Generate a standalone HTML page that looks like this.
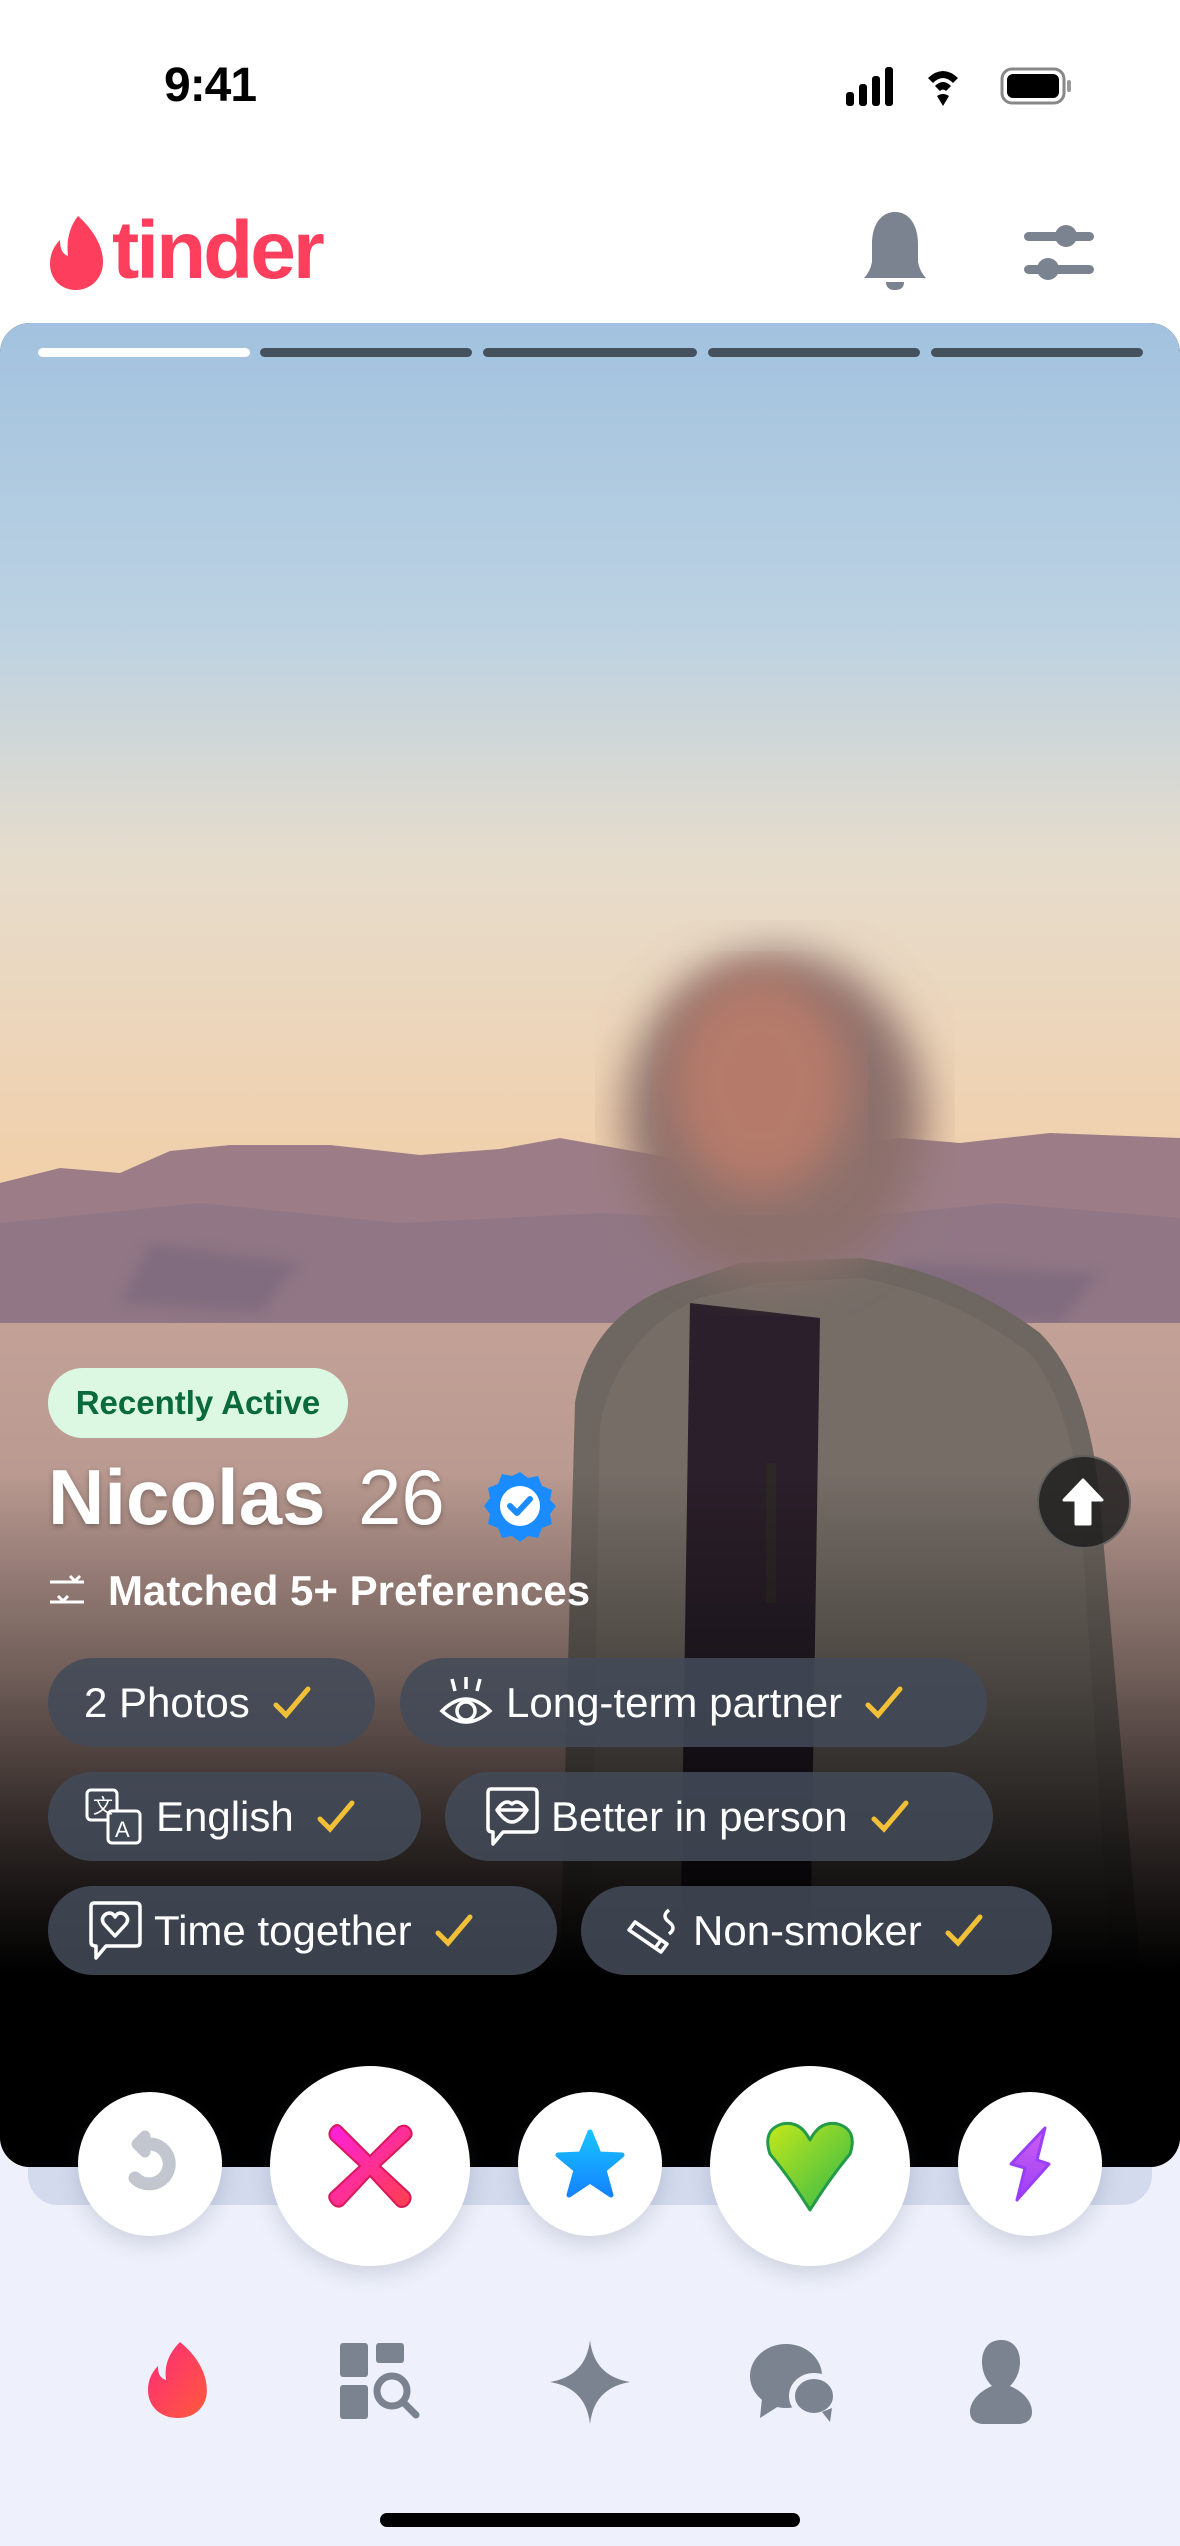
<!DOCTYPE html>
<html><head><meta charset="utf-8">
<style>
*{margin:0;padding:0;box-sizing:border-box}
body{width:1180px;height:2546px;position:relative;overflow:hidden;background:#fff;font-family:"Liberation Sans",sans-serif}
.abs{position:absolute}
.chip{position:absolute;height:89px;border-radius:45px;background:rgba(66,74,88,0.88);color:#fff;font-size:42px;display:flex;align-items:center;padding-left:36px;white-space:nowrap}
.chip svg.ic{margin-right:12px}
.chk{margin-left:22px}
.btn{position:absolute;border-radius:50%;background:#fff;box-shadow:0 8px 22px rgba(60,70,100,0.18);display:flex;align-items:center;justify-content:center}
</style></head><body>
<div class="abs" style="left:0;top:1960px;width:1180px;height:586px;background:#eef1fb"></div>

<!-- status bar -->
<div class="abs" style="left:164px;top:58px;font-size:48px;font-weight:bold;color:#000;letter-spacing:-1px">9:41</div>
<svg class="abs" style="left:846px;top:66px" width="240" height="42" viewBox="0 0 240 42">
<rect x="0" y="26" width="8" height="14" rx="3" fill="#000"/><rect x="13" y="18" width="8" height="22" rx="3" fill="#000"/><rect x="26" y="10" width="8" height="30" rx="3" fill="#000"/><rect x="39" y="1" width="8" height="39" rx="3" fill="#000"/>
<path d="M82 12 Q97 -2 112 12 L107 17 Q97 7 87 17Z M89 20 Q97 12 105 20 L100 25 Q97 22 94 25Z M97 40 L91 30 Q97 26 103 30Z" fill="#000"/>
<rect x="156" y="3" width="62" height="34" rx="10" fill="none" stroke="#888" stroke-width="3"/><rect x="161" y="8" width="52" height="24" rx="6" fill="#000"/><rect x="221" y="14" width="4" height="12" rx="2" fill="#999"/>
</svg>

<!-- header -->
<svg class="abs" style="left:48px;top:214px" width="60" height="76" viewBox="0 0 60 76"><path d="M30 2 C50 20 58 40 54 56 C50 70 38 76 28 76 C12 76 2 64 2 50 C2 40 6 32 12 26 C12 34 14 40 20 42 C18 26 22 12 30 2Z" fill="#fd3f5d"/></svg>
<div class="abs" style="left:112px;top:204px;font-size:82px;font-weight:bold;color:#fd3f5d;letter-spacing:-3px">tinder</div>
<svg class="abs" style="left:862px;top:212px" width="66" height="78" viewBox="0 0 66 78"><path d="M33 0 C48 0 56 14 56 32 L56 50 Q58 60 64 66 L2 66 Q8 60 10 50 L10 32 C10 14 18 0 33 0Z" fill="#7b8390"/><path d="M24 70 L42 70 Q42 78 33 78 Q24 78 24 70Z" fill="#7b8390"/></svg>
<svg class="abs" style="left:1022px;top:218px" width="74" height="68" viewBox="0 0 74 68"><rect x="2" y="14" width="70" height="9" rx="4.5" fill="#7b8390"/><circle cx="44" cy="18" r="11" fill="#7b8390"/><rect x="2" y="47" width="70" height="9" rx="4.5" fill="#7b8390"/><circle cx="26" cy="51" r="11" fill="#7b8390"/></svg>

<!-- shadow card -->
<div class="abs" style="left:28px;top:400px;width:1124px;height:1805px;border-radius:30px;background:#d3daee"></div>

<!-- card -->
<div class="abs" style="left:0;top:323px;width:1180px;height:1844px;border-radius:30px;overflow:hidden;background:#000">
<svg width="1180" height="1844" viewBox="0 0 1180 1844" style="position:absolute;left:0;top:0">
<defs>
<linearGradient id="sky" x1="0" y1="0" x2="0" y2="1"><stop offset="0" stop-color="#a2c2df"/><stop offset="0.35" stop-color="#bcd2e2"/><stop offset="0.62" stop-color="#e6dccc"/><stop offset="1" stop-color="#f2cfa9"/></linearGradient>
<linearGradient id="dark" x1="0" y1="0" x2="0" y2="1"><stop offset="0" stop-color="#000" stop-opacity="0"/><stop offset="0.4" stop-color="#000" stop-opacity="0.35"/><stop offset="0.75" stop-color="#000" stop-opacity="0.75"/><stop offset="1" stop-color="#000" stop-opacity="1"/></linearGradient>
<linearGradient id="sand" x1="0" y1="0" x2="0" y2="1"><stop offset="0" stop-color="#c3a197"/><stop offset="1" stop-color="#8f7a76"/></linearGradient>
<filter id="bl"><feGaussianBlur stdDeviation="22"/></filter>
<filter id="bl2"><feGaussianBlur stdDeviation="6"/></filter>
</defs>
<rect width="1180" height="870" fill="url(#sky)"/>
<path d="M0 860 L60 845 L120 850 L170 828 L230 822 L330 822 L420 832 L500 826 L560 815 L700 840 L900 815 L960 820 L1050 810 L1180 815 L1180 1010 L0 1010Z" fill="#9c7d87"/>
<path d="M0 900 L200 880 L400 900 L600 890 L800 900 L1000 880 L1180 895 L1180 1010 L0 1010Z" fill="#8e7584" opacity="0.8"/>
<path d="M150 920 L300 940 L260 990 L120 980Z M900 940 L1100 950 L1060 1000 L880 990Z" fill="#6f6278" opacity="0.5" filter="url(#bl2)"/>
<rect x="0" y="1000" width="1180" height="844" fill="url(#sand)"/>
<!-- person -->
<path d="M575 1080 Q590 990 680 960 L740 940 L860 935 Q960 950 1040 1010 Q1090 1060 1100 1180 L1140 1640 L560 1640 Z" fill="#6e6660"/>
<path d="M600 1100 Q620 1010 700 975 L760 960 L860 955 Q950 970 1030 1030 Q1070 1080 1080 1180 L1110 1640 L590 1640Z" fill="#7a716a" opacity="0.6"/>
<path d="M690 980 L820 995 L810 1640 L680 1640Z" fill="#2a1f2a"/>
<rect x="766" y="1140" width="10" height="140" fill="#2c2826"/>
<ellipse cx="775" cy="795" rx="150" ry="165" fill="#8c6f6c" filter="url(#bl)"/>
<ellipse cx="760" cy="760" rx="90" ry="110" fill="#b57a6a" filter="url(#bl)"/>
<rect x="0" y="1150" width="1180" height="500" fill="url(#dark)"/>
<rect x="0" y="1648" width="1180" height="200" fill="#000"/>
</svg>
<!-- progress -->
<div class="abs" style="left:38px;top:25px;width:212px;height:9px;border-radius:5px;background:#fff"></div>
<div class="abs" style="left:260px;top:25px;width:212px;height:9px;border-radius:5px;background:#45525e"></div>
<div class="abs" style="left:483px;top:25px;width:214px;height:9px;border-radius:5px;background:#45525e"></div>
<div class="abs" style="left:708px;top:25px;width:212px;height:9px;border-radius:5px;background:#45525e"></div>
<div class="abs" style="left:931px;top:25px;width:212px;height:9px;border-radius:5px;background:#45525e"></div>
</div>

<!-- recently active -->
<div class="abs" style="left:48px;top:1368px;width:300px;height:70px;border-radius:35px;background:#dcf8e2;color:#0a6a3c;font-size:33px;font-weight:bold;display:flex;align-items:center;justify-content:center">Recently Active</div>
<!-- name -->
<div class="abs" style="left:48px;top:1452px;font-size:78px;font-weight:bold;color:#fff;text-shadow:0 2px 6px rgba(0,0,0,.3)">Nicolas</div>
<div class="abs" style="left:358px;top:1452px;font-size:78px;color:#fff;text-shadow:0 2px 6px rgba(0,0,0,.3)">26</div>
<svg class="abs" style="left:484px;top:1470px" width="72" height="72" viewBox="0 0 72 72"><path d="M36 2 L44 8 L54 6 L58 16 L68 20 L66 30 L72 36 L66 44 L68 54 L58 58 L54 68 L44 66 L36 72 L28 66 L18 68 L14 58 L4 54 L6 44 L0 36 L6 28 L4 18 L14 14 L18 4 L28 6Z" fill="#1a8cff"/><circle cx="36" cy="36" r="20" fill="#fff"/><path d="M26 36 L33 43 L46 29" stroke="#1a8cff" stroke-width="6" fill="none" stroke-linecap="round" stroke-linejoin="round"/></svg>
<div class="abs" style="left:1037px;top:1455px;width:94px;height:94px;border-radius:50%;background:rgba(30,30,30,.85);border:2px solid rgba(255,255,255,.25)"></div>
<svg class="abs" style="left:1060px;top:1476px" width="46" height="52" viewBox="0 0 46 52"><path d="M23 4 L42 24 L30 24 L30 48 L16 48 L16 24 L4 24Z" fill="#fff" stroke="#fff" stroke-width="3" stroke-linejoin="round"/></svg>
<!-- matched -->
<svg class="abs" style="left:48px;top:1572px" width="38" height="40" viewBox="0 0 38 40"><g stroke="#fff" stroke-width="3" fill="none"><path d="M2 10 H36 M2 30 H36"/><path d="M22 4 l5 5 5-5" /><path d="M10 24 l5 5 5-5"/></g></svg>
<div class="abs" style="left:108px;top:1567px;font-size:42px;font-weight:bold;color:#fff">Matched 5+ Preferences</div>

<!-- chips -->
<div class="chip" style="left:48px;top:1658px;width:327px">2 Photos<svg class="chk" width="40" height="36" viewBox="0 0 40 36"><path d="M4 20 L14 30 L36 4" stroke="#f2c037" stroke-width="5" fill="none" stroke-linecap="round"/></svg></div>
<div class="chip" style="left:400px;top:1658px;width:587px;padding-left:38px"><svg class="ic" width="56" height="56" viewBox="0 0 56 56"><g stroke="#fff" stroke-width="3.5" fill="none"><path d="M4 36 Q28 12 52 36 Q28 58 4 36Z"/><circle cx="28" cy="36" r="9"/><path d="M14 4 l3 12 M28 2 v12 M42 4 l-3 12"/></g></svg>Long-term partner<svg class="chk" width="40" height="36" viewBox="0 0 40 36"><path d="M4 20 L14 30 L36 4" stroke="#f2c037" stroke-width="5" fill="none" stroke-linecap="round"/></svg></div>
<div class="chip" style="left:48px;top:1772px;width:373px"><svg class="ic" width="60" height="60" viewBox="0 0 60 60"><g stroke="#fff" stroke-width="3" fill="none"><rect x="3" y="3" width="30" height="30" rx="4"/><rect x="24" y="24" width="32" height="32" rx="4" fill="#424a58"/></g><text x="9" y="26" fill="#fff" font-size="20" font-family="Noto Sans CJK SC,sans-serif">文</text><text x="31" y="50" fill="#fff" font-size="22" font-family="Liberation Sans">A</text></svg>English<svg class="chk" width="40" height="36" viewBox="0 0 40 36"><path d="M4 20 L14 30 L36 4" stroke="#f2c037" stroke-width="5" fill="none" stroke-linecap="round"/></svg></div>
<div class="chip" style="left:445px;top:1772px;width:548px;padding-left:40px"><svg class="ic" width="54" height="62" viewBox="0 0 54 62"><g stroke="#fff" stroke-width="3.5" fill="none" stroke-linejoin="round"><path d="M6 3 H48 Q52 3 52 7 V42 Q52 46 48 46 H18 L8 58 V46 Q3 46 3 42 V7 Q3 3 6 3Z"/><path d="M12 24 Q20 12 27 18 Q34 12 42 24 Q34 36 27 36 Q20 36 12 24Z M12 24 H42"/></g></svg>Better in person<svg class="chk" width="40" height="36" viewBox="0 0 40 36"><path d="M4 20 L14 30 L36 4" stroke="#f2c037" stroke-width="5" fill="none" stroke-linecap="round"/></svg></div>
<div class="chip" style="left:48px;top:1886px;width:509px;padding-left:40px"><svg class="ic" width="54" height="62" viewBox="0 0 54 62"><g stroke="#fff" stroke-width="3.5" fill="none" stroke-linejoin="round"><path d="M6 3 H48 Q52 3 52 7 V42 Q52 46 48 46 H18 L8 58 V46 Q3 46 3 42 V7 Q3 3 6 3Z"/><path d="M27 36 L16 24 Q12 18 18 14 Q24 11 27 17 Q30 11 36 14 Q42 18 38 24Z"/></g></svg>Time together<svg class="chk" width="40" height="36" viewBox="0 0 40 36"><path d="M4 20 L14 30 L36 4" stroke="#f2c037" stroke-width="5" fill="none" stroke-linecap="round"/></svg></div>
<div class="chip" style="left:581px;top:1886px;width:471px;padding-left:44px"><svg class="ic" width="56" height="50" viewBox="0 0 56 50"><g stroke="#fff" stroke-width="3.5" fill="none" stroke-linejoin="round"><path d="M4 24 L36 46 L42 38 L10 16Z M30 42 L36 34"/><path d="M44 4 Q36 10 44 16 Q52 22 44 28"/></g></svg>Non-smoker<svg class="chk" width="40" height="36" viewBox="0 0 40 36"><path d="M4 20 L14 30 L36 4" stroke="#f2c037" stroke-width="5" fill="none" stroke-linecap="round"/></svg></div>

<!-- action buttons -->
<div class="btn" style="left:78px;top:2092px;width:144px;height:144px"><svg width="70" height="76" viewBox="0 0 70 76"><path d="M30 10 L22 18 L30 26" stroke="#c2c6ce" stroke-width="11" fill="none" stroke-linecap="round" stroke-linejoin="round"/><path d="M24 18 H36 A20 20 0 1 1 20 52" stroke="#c2c6ce" stroke-width="13" fill="none" stroke-linecap="round"/></svg></div>
<div class="btn" style="left:270px;top:2066px;width:200px;height:200px"><svg width="86" height="86" viewBox="0 0 86 86"><defs><linearGradient id="xg" x1="0" y1="0" x2="1" y2="1"><stop offset="0" stop-color="#ff1fe0"/><stop offset="1" stop-color="#ff3f4a"/></linearGradient></defs><path d="M14 4 L43 33 L72 4 Q80 0 84 8 Q86 12 82 16 L53 43 L82 70 Q86 76 80 82 Q74 86 70 82 L43 53 L16 82 Q10 86 5 80 Q0 74 4 70 L33 43 L4 16 Q0 10 6 4 Q10 0 14 4Z" fill="url(#xg)" stroke="#d8185a" stroke-width="2"/></svg></div>
<div class="btn" style="left:518px;top:2092px;width:144px;height:144px"><svg width="70" height="70" viewBox="0 0 70 70"><defs><linearGradient id="sg" x1="0" y1="0" x2="0" y2="1"><stop offset="0" stop-color="#18c2ff"/><stop offset="1" stop-color="#1484ff"/></linearGradient></defs><path d="M35 3 L44 25 L67 26 L49 41 L56 66 L35 52 L14 66 L21 41 L3 26 L26 25Z" fill="url(#sg)" stroke="url(#sg)" stroke-width="5" stroke-linejoin="round"/></svg></div>
<div class="btn" style="left:710px;top:2066px;width:200px;height:200px"><svg width="96" height="96" viewBox="0 0 96 96"><defs><linearGradient id="hg" x1="0" y1="0" x2="1" y2="1"><stop offset="0" stop-color="#c4e81a"/><stop offset="1" stop-color="#2fb84a"/></linearGradient></defs><path d="M48 92 Q28 60 8 36 Q0 12 20 6 Q38 2 48 22 Q58 2 76 6 Q96 12 88 36 Q68 60 48 92Z" fill="url(#hg)" stroke="#239a48" stroke-width="3" stroke-linejoin="round"/></svg></div>
<div class="btn" style="left:958px;top:2092px;width:144px;height:144px"><svg width="50" height="76" viewBox="0 0 50 76"><defs><linearGradient id="bg2" x1="0" y1="0" x2="0" y2="1"><stop offset="0" stop-color="#d060f0"/><stop offset="1" stop-color="#9a3ef8"/></linearGradient></defs><path d="M40 2 L32 34 L44 38 L12 74 L20 42 L6 38Z" fill="url(#bg2)" stroke="#9a3ef8" stroke-width="3" stroke-linejoin="round"/></svg></div>

<!-- tab bar -->
<svg class="abs" style="left:144px;top:2340px" width="68" height="80" viewBox="0 0 68 80"><defs><linearGradient id="fg" x1="0" y1="0" x2="1" y2="1"><stop offset="0" stop-color="#fd2a7a"/><stop offset="1" stop-color="#ff5a3c"/></linearGradient></defs><path d="M36 2 C56 18 66 40 62 58 C58 72 46 78 34 78 C16 78 4 66 4 50 C4 40 8 32 14 26 C14 34 16 38 22 40 C20 24 26 12 36 2Z" fill="url(#fg)"/></svg>
<svg class="abs" style="left:340px;top:2343px" width="88" height="82" viewBox="0 0 88 82"><g fill="#7b8390"><rect x="0" y="0" width="28" height="34" rx="3"/><rect x="36" y="0" width="28" height="20" rx="3"/><rect x="0" y="42" width="28" height="34" rx="3"/></g><circle cx="52" cy="48" r="15" fill="none" stroke="#7b8390" stroke-width="7"/><path d="M63 59 L76 72" stroke="#7b8390" stroke-width="7" stroke-linecap="round"/></svg>
<svg class="abs" style="left:550px;top:2340px" width="80" height="84" viewBox="0 0 80 84"><path d="M40 0 Q44 36 80 42 Q44 48 40 84 Q36 48 0 42 Q36 36 40 0Z" fill="#7b8390"/></svg>
<svg class="abs" style="left:748px;top:2342px" width="96" height="82" viewBox="0 0 96 82"><ellipse cx="38" cy="34" rx="36" ry="32" fill="#7b8390"/><path d="M14 56 L12 76 L34 62Z" fill="#7b8390"/><ellipse cx="66" cy="54" rx="22" ry="20" fill="#7b8390" stroke="#eef1fb" stroke-width="6"/><path d="M74 70 L82 80 L84 66Z" fill="#7b8390"/></svg>
<svg class="abs" style="left:968px;top:2340px" width="66" height="84" viewBox="0 0 66 84"><path d="M33 0 C46 0 52 10 52 22 C52 34 46 42 42 46 C56 52 64 62 64 72 C64 80 58 84 50 84 L16 84 C8 84 2 80 2 72 C2 62 10 52 24 46 C20 42 14 34 14 22 C14 10 20 0 33 0Z" fill="#7b8390"/></svg>

<div class="abs" style="left:380px;top:2513px;width:420px;height:14px;border-radius:7px;background:#000"></div>
</body></html>
